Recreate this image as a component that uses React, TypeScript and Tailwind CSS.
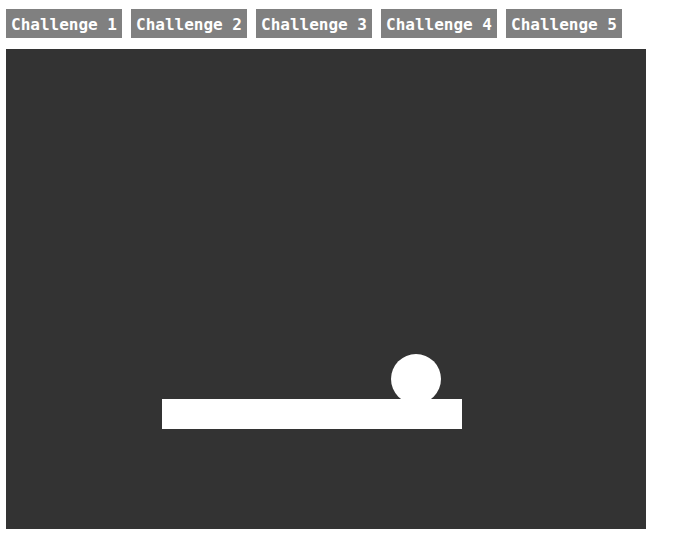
const challenges = ["Challenge 1", "Challenge 2", "Challenge 3", "Challenge 4", "Challenge 5"]

export default function App() {
  return (
    <div className="min-h-[544px] w-[673px] bg-white pl-[6px] pt-[9px]">
      <div className="flex gap-[9px]">
        {challenges.map((label) => (
          <button
            key={label}
            className="h-[29px] w-[116px] bg-[#808080] pt-[2px] text-center font-['DejaVu_Sans_Mono',monospace] text-[16px] font-bold leading-[27px] text-white"
          >
            {label}
          </button>
        ))}
      </div>

      <div className="relative mt-[11px] h-[480px] w-[640px] bg-[#333333]">
        {/* ball */}
        <div className="absolute left-[385px] top-[305px] size-[50px] rounded-full bg-white" />
        {/* paddle */}
        <div className="absolute left-[156px] top-[350px] h-[30px] w-[300px] bg-white" />
      </div>
    </div>
  )
}
